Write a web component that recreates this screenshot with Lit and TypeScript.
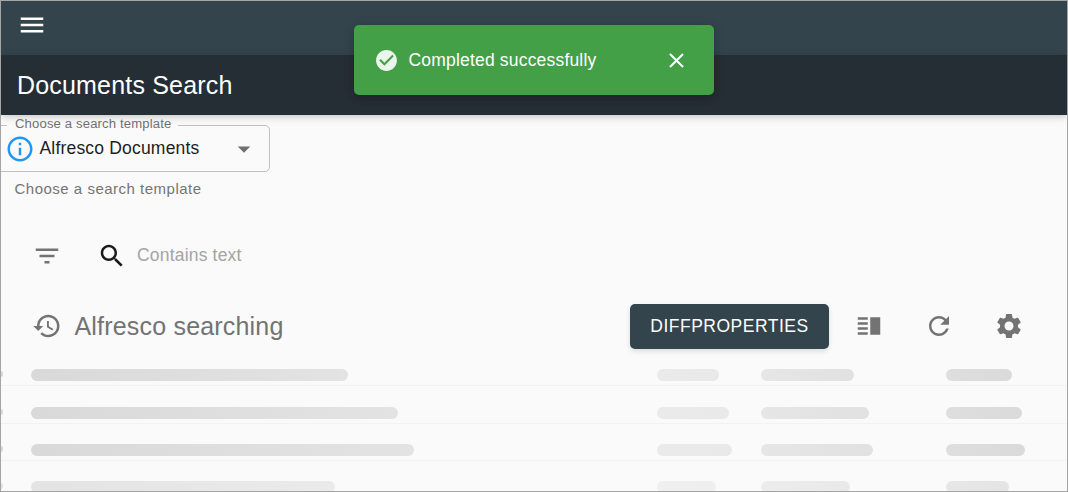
import { LitElement, html, css, svg } from "lit";
import { customElement, property } from "lit/decorators.js";
import { styleMap } from "lit/directives/style-map.js";

const ICONS: Record<string, string> = {
  menu: "M3 18h18v-2H3v2zm0-5h18v-2H3v2zm0-7v2h18V6H3z",
  info: "M11 7h2v2h-2zm0 4h2v6h-2zm1-9C6.48 2 2 6.48 2 12s4.48 10 10 10 10-4.48 10-10S17.52 2 12 2zm0 18c-4.41 0-8-3.59-8-8s3.59-8 8-8 8 3.59 8 8-3.59 8-8 8z",
  arrow: "M7 10l5 5 5-5z",
  filter: "M10 18h4v-2h-4v2zM3 6v2h18V6H3zm3 7h12v-2H6v2z",
  search: "M15.5 14h-.79l-.28-.27C15.41 12.59 16 11.11 16 9.5 16 5.91 13.09 3 9.5 3S3 5.91 3 9.5 5.91 16 9.5 16c1.61 0 3.09-.59 4.23-1.57l.27.28v.79l5 4.99L20.49 19l-4.99-5zm-6 0C7.01 14 5 11.99 5 9.5S7.01 5 9.5 5 14 7.01 14 9.5 11.99 14 9.5 14z",
  history: "M13 3c-4.97 0-9 4.03-9 9H1l3.89 3.89.07.14L9 12H6c0-3.87 3.13-7 7-7s7 3.13 7 7-3.13 7-7 7c-1.93 0-3.68-.79-4.94-2.06l-1.42 1.42C8.27 19.99 10.51 21 13 21c4.97 0 9-4.03 9-9s-4.03-9-9-9zm-1 5v5l4.28 2.54.72-1.21-3.5-2.08V8H12z",
  split: "M3 15h8v-2H3v2zm0 4h8v-2H3v2zm0-8h8V9H3v2zm0-6v2h8V5H3zm10 0h8v14h-8V5z",
  refresh: "M17.65 6.35C16.2 4.9 14.21 4 12 4c-4.42 0-7.99 3.58-7.99 8s3.57 8 7.99 8c3.73 0 6.84-2.55 7.73-6h-2.08c-.82 2.33-3.04 4-5.65 4-3.31 0-6-2.69-6-6s2.69-6 6-6c1.66 0 3.14.69 4.22 1.78L13 11h7V4l-2.35 2.35z",
  settings: "M19.14 12.94c.04-.3.06-.61.06-.94 0-.32-.02-.64-.07-.94l2.03-1.58c.18-.14.23-.41.12-.61l-1.92-3.32c-.12-.22-.37-.29-.59-.22l-2.39.96c-.5-.38-1.03-.7-1.62-.94l-.36-2.54c-.04-.24-.24-.41-.48-.41h-3.84c-.24 0-.43.17-.47.41l-.36 2.54c-.59.24-1.13.57-1.62.94l-2.39-.96c-.22-.08-.47 0-.59.22L2.74 8.87c-.12.21-.08.47.12.61l2.03 1.58c-.05.3-.09.63-.09.94s.02.64.07.94l-2.03 1.58c-.18.14-.23.41-.12.61l1.92 3.32c.12.22.37.29.59.22l2.39-.96c.5.38 1.03.7 1.62.94l.36 2.54c.05.24.24.41.48.41h3.84c.24 0 .44-.17.47-.41l.36-2.54c.59-.24 1.13-.56 1.62-.94l2.39.96c.22.08.47 0 .59-.22l1.92-3.32c.12-.22.07-.47-.12-.61l-2.01-1.58zM12 15.6c-1.98 0-3.6-1.62-3.6-3.6s1.62-3.6 3.6-3.6 3.6 1.62 3.6 3.6-1.62 3.6-3.6 3.6z",
  success: "M12 2C6.5 2 2 6.5 2 12S6.5 22 12 22 22 17.5 22 12 17.5 2 12 2M10 17L5 12L6.41 10.59L10 14.17L17.59 6.58L19 8L10 17Z",
  close: "M19 6.41L17.59 5 12 10.59 6.41 5 5 6.41 10.59 12 5 17.59 6.41 19 12 13.41 17.59 19 19 17.59 13.41 12z",
};

@customElement("ui-icon")
class UiIcon extends LitElement {
  @property() name = "";
  static styles = css`
    :host { display: block; flex: none; width: 30px; height: 30px; }
    .glyph { display: block; width: 100%; height: 100%; fill: currentColor; }
  `;
  render() {
    return html`<svg class="glyph" viewBox="0 0 24 24" aria-hidden="true">${svg`<path d=${ICONS[this.name] ?? ""}></path>`}</svg>`;
  }
}

// Placeholder widths for the four visible columns of each loading row.
const ROWS = [
  [317, 62, 93, 66],
  [367, 72, 108, 76],
  [383, 75, 112, 79],
  [304, 59, 89, 63],
];

@customElement("app-root")
class AppRoot extends LitElement {
  static styles = css`
    :host { display: block; font-family: "Liberation Sans", Arial, sans-serif; }
    .frame {
      position: relative; box-sizing: border-box; width: 1068px; height: 492px;
      border: 1px solid #a5a5a5; background: #fafafa; overflow: hidden;
      font-size: 17.5px; letter-spacing: 0.1875px; line-height: 25px;
      display: flex; flex-direction: column;
    }
    .topbar { height: 54px; flex: none; box-sizing: border-box; background: #34444c; color: #fff; padding: 9px 0 0 16px; }
    .titlebar {
      height: 60px; flex: none; background: #252e34; color: #fff; display: flex; align-items: center;
      padding-left: 16px; font-size: 25px; line-height: 40px;
      box-shadow: 0 2px 5px -1px rgba(0,0,0,.1), 0 5px 6px rgba(0,0,0,.05), 0 1px 12px rgba(0,0,0,.06);
    }
    .template { flex: none; width: 269px; height: 86px; }
    .select {
      box-sizing: border-box; margin: 3px 0 0 -10px; padding: 0 0 0 10px; border: 1px solid #c0c0c0; border-radius: 5px;
      width: 279px; height: 54px; min-width: 0;
    }
    .legend { margin-left: 5px; padding: 0 7px 0 8px; font-size: 13.125px; letter-spacing: .14px; line-height: 12px; color: #707070; height: 14px; }
    .choice { display: flex; align-items: center; height: 30px; margin-top: 1.7px; padding-left: 3px; color: #1e1e1e; }
    .value { width: 185px; padding: 0 0 1px 4.5px; }
    .info { color: #2196f3; }
    .arrow { color: #6f6f6f; margin-left: 4.5px; }
    .helper { margin: 8px 0 0 13.5px; font-size: 15px; letter-spacing: .5px; line-height: 18px; color: #757575; }
    .filters { display: flex; align-items: center; height: 30px; margin: 39.5px 0 0 31px; flex: none; color: #737373; }
    .search { color: #1a1a1a; margin: 0 10px 0 35px; }
    .placeholder { color: #a4a4a4; padding-bottom: 1px; }
    .heading { display: flex; align-items: center; height: 45px; margin: 33.5px 43px 0 31px; flex: none; color: #737373; }
    .history { margin-bottom: 1px; }
    .caption { font-size: 25px; line-height: 40px; margin: 0 0 2px 12.5px; flex: 1; }
    .button {
      height: 45px; width: 199px; box-sizing: border-box; border: 0; border-radius: 5px; padding: 0 0 2px; margin-right: 25px;
      background: #34444c; color: #fff; font: 17.5px/30px "Liberation Sans", Arial, sans-serif; letter-spacing: .5px;
      box-shadow: 0 3px 5px rgba(0,0,0,.07), 0 1px 6px rgba(0,0,0,.06);
    }
    .actions { display: flex; gap: 40px; margin-bottom: 1px; }
    .rows { display: flex; flex-direction: column; flex: none; }
    .row {
      box-sizing: border-box; height: 37px; border-bottom: 1px solid #f2f2f2;
      display: grid; grid-template-columns: 30.4px 626px 103.2px 185px 1fr; align-items: end; padding-bottom: 4px;
    }
    .row:nth-child(2) { height: 38px; }
    .edge { width: 2px; height: 6px; border-radius: 0 3px 3px 0; background: #d9d9d9; margin-bottom: 4px; }
    .bar { height: 12px; border-radius: 6px; }
    .c0 { background: linear-gradient(90deg, #d9d9d9, #e3e3e3); }
    .c1 { background: linear-gradient(90deg, #eaeaea, #e9e9e9); }
    .c2 { background: linear-gradient(90deg, #e6e6e6, #e1e1e1); }
    .c3 { background: linear-gradient(90deg, #dedede, #dadada); }
    .row:nth-child(4) .bar, .row:nth-child(4) .edge { opacity: .68; }
    .toast {
      position: absolute; left: 353px; top: 24px; width: 360px; height: 70px; box-sizing: border-box;
      display: flex; align-items: center; padding: 0 25px 0 20px; border-radius: 5px; background: #44a047; color: #fff;
      box-shadow: 0 4px 6px rgba(0,0,0,.12), 0 1px 12px rgba(0,0,0,.12);
    }
    .small { width: 25px; height: 25px; }
    .status { opacity: .9; }
    .message { flex: 1; margin-left: 9.5px; }
  `;
  render() {
    return html`
      <main class="frame">
        <header class="topbar"><ui-icon name="menu"></ui-icon></header>
        <div class="titlebar">Documents Search</div>
        <section class="template">
          <fieldset class="select">
            <legend class="legend">Choose a search template</legend>
            <div class="choice">
              <ui-icon class="info" name="info"></ui-icon>
              <span class="value">Alfresco Documents</span>
              <ui-icon class="arrow" name="arrow"></ui-icon>
            </div>
          </fieldset>
          <div class="helper">Choose a search template</div>
        </section>
        <section class="filters">
          <ui-icon name="filter"></ui-icon>
          <ui-icon class="search" name="search"></ui-icon>
          <span class="placeholder">Contains text</span>
        </section>
        <section class="heading">
          <ui-icon class="history" name="history"></ui-icon>
          <span class="caption">Alfresco searching</span>
          <button class="button">DIFFPROPERTIES</button>
          <div class="actions">
            <ui-icon name="split"></ui-icon>
            <ui-icon name="refresh"></ui-icon>
            <ui-icon name="settings"></ui-icon>
          </div>
        </section>
        <section class="rows">
          ${ROWS.map((widths) => html`<div class="row">
            <div class="edge"></div>
            ${widths.map((w, i) => html`<div class="bar c${i}" style=${styleMap({ width: `${w}px` })}></div>`)}
          </div>`)}
        </section>
        <div class="toast" role="alert">
          <ui-icon class="small status" name="success"></ui-icon>
          <span class="message">Completed successfully</span>
          <ui-icon class="small" name="close"></ui-icon>
        </div>
      </main>`;
  }
}
